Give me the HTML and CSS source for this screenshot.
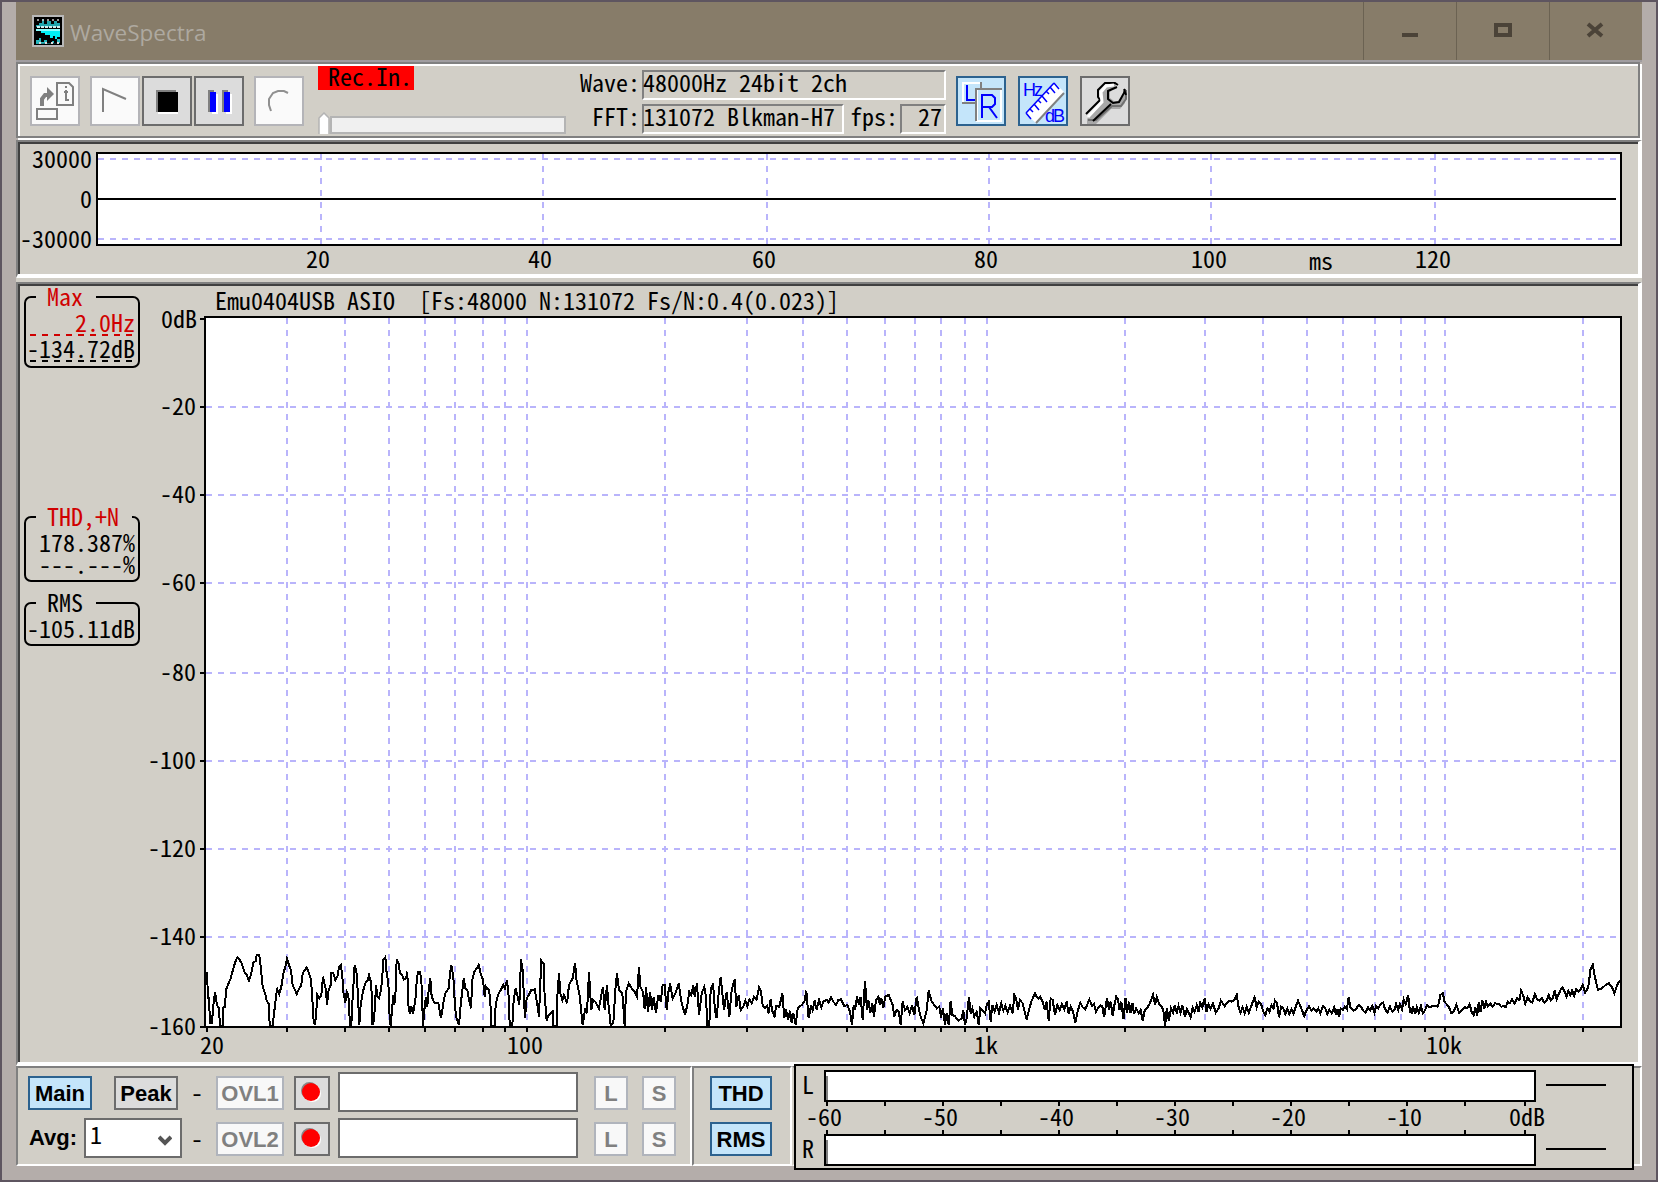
FILE: index.html
```html
<!DOCTYPE html>
<html>
<head>
<meta charset="utf-8">
<title>WaveSpectra</title>
<link rel="stylesheet" href="styles.css">
</head>
<body>
<div class="window">
	<header class="titlebar">
		<svg class="app-icon" width="32" height="32" viewBox="0 0 32 32">
			<rect width="32" height="32" fill="#b8b8b8"/>
			<rect x="2" y="2" width="28" height="28" fill="#000"/>
			<path d="M4 12v-2h3v-2h3v-4h2v5h3v-3h4v3h3v-3h3v2h3v4z" fill="#1fa5ad"/>
			<path d="M5 12h23" stroke="#cfeeee" stroke-width="2" stroke-dasharray="3 1"/>
			<path d="M4 15h24v7h-3v2h-2v-3h-2v2h-3v-3h-5v-2h-4v-2h-5z" fill="#00f0f5"/>
			<path d="M4 15h24" stroke="#8ff" stroke-width="2"/>
			<path d="M4 29v-4h3v-2h2v4h3v-2h3v3h5v-2h2v2h3v-4h3v4z" fill="#27b9c0"/>
			<path d="M5 5h23" stroke="#ccc" stroke-width="1.5" stroke-dasharray="2 3"/>
			<path d="M7 28h20" stroke="#ddd" stroke-width="2" stroke-dasharray="2 4"/>
		</svg>
		<span class="title">WaveSpectra</span>
		<div class="controls">
			<span class="control"><svg width="20" height="16"><path d="M2 13h16" stroke="#4b4338" stroke-width="4"/></svg></span>
			<span class="control"><svg width="20" height="16"><path d="M3 3h14v10H3z" fill="none" stroke="#4b4338" stroke-width="4"/></svg></span>
			<span class="control"><svg width="20" height="16"><path d="M2 2l14 12M16 2L2 14" stroke="#4b4338" stroke-width="4"/></svg></span>
		</div>
	</header>

	<div class="toolbar">
		<button class="tool disabled">
			<svg width="46" height="46" viewBox="32 78 46 46" fill="none" stroke="#808080" stroke-width="2">
				<path d="M57 83h12l4 4v18h-16zM37 109h20v10H37z"/>
				<path d="M66 86v2M64 92h4M66 90v10h3"/>
				<path d="M42 106v-7l3-4h4" stroke-width="4"/>
				<path d="M47 87l7 7-7 7z" fill="#808080" stroke="none"/>
			</svg>
		</button>
		<button class="tool disabled play">
			<svg width="46" height="46" viewBox="92 78 46 46" fill="none" stroke="#808080" stroke-width="2"><path d="M103 112V89l23 10"/></svg>
		</button>
		<button class="tool">
			<svg width="46" height="46" viewBox="144 78 46 46"><path d="M156 90h20v22h-20z" fill="#808080"/><path d="M158 112h20v2h-20z" fill="#fff"/><path d="M158 92h20v20h-20z"/></svg>
		</button>
		<button class="tool">
			<svg width="46" height="46" viewBox="196 78 46 46"><path d="M208 90h6v22h-6zM222 90h6v22h-6z" fill="#808080"/><path d="M212 94h6v20h-6zM226 94h6v20h-6z" fill="#fff"/><path d="M210 92h6v20h-6zM224 92h6v20h-6z" fill="#00f"/></svg>
		</button>
		<button class="tool disabled rec">
			<svg width="46" height="46" viewBox="256 78 46 46" fill="none" stroke="#909090" stroke-width="2"><path d="M288 93l-4-2h-6l-5 2-4 6v6l2 6"/></svg>
		</button>

		<div class="transport">
			<div class="status">&nbsp;Rec.In.</div>
			<div class="slider"><svg class="thumb" width="12" height="22"><path d="M1 22V6l5-5 5 5v16" fill="#fff" stroke="#b4b4b4" stroke-width="1.5"/></svg><div class="track"></div></div>
		</div>

		<div class="info">
			<div class="info-row"><label>Wave:</label><span class="field grow">48000Hz 24bit 2ch</span></div>
			<div class="info-row"><label>FFT:</label><span class="field fft">131072 Blkman-H7</span><label class="fps-label">fps:</label><span class="field fps">27</span></div>
		</div>

		<button class="tool active lr">
			<svg width="46" height="46" viewBox="958 78 46 46" fill="none" stroke-width="2">
				<path d="M963 103V83h18v6" stroke="#fff"/><path d="M962 103h13M981 82v6" stroke="#808080"/>
				<path d="M967 85v15h9" stroke="#00f"/>
				<path d="M977 121V89h24v32z" stroke="#fff"/><path d="M976 121V89h26" stroke="#808080"/>
				<path d="M982 118V95h10l3 3v6l-3 3h-10M989 107l8 11" stroke="#00f"/>
			</svg>
		</button>
		<button class="tool active scale">
			<svg width="46" height="46" viewBox="1020 78 46 46">
				<path d="M1055 83l9 9-28 31-10-9z" fill="#fff"/>
				<path d="M1064 93l-28 30" stroke="#808080" stroke-width="2"/>
				<path d="M1026 113l28-30M1026 113l5 6M1030 109l3 3M1034 104l5 6M1038 100l3 3M1042 96l5 6M1046 91l3 3M1050 87l5 6M1054 83l5 6" stroke="#00f" stroke-width="1.5" fill="none"/>
				<text class="glyph" x="1023" y="96">Hz</text>
				<text class="glyph" x="1045" y="122">dB</text>
			</svg>
		</button>
		<button class="tool scale">
			<svg width="46" height="46" viewBox="1082 78 46 46" fill="none">
				<path d="M1087 119l15-17v-11l6-7h9l-7 8v6l4 3h4l6-9 1 4v7l-5 6h-9l-15 15h-9z" fill="#a8a8a8"/>
				<path d="M1088 120h8l16-14h9l5-7v-9" stroke="#707070" stroke-width="2"/>
				<path d="M1086 114l14-14-2-3v-7l7-7h10l3 2" stroke="#000" stroke-width="2"/>
				<path d="M1088 117l14-15-1-10 5-6 8-1" stroke="#fff" stroke-width="3"/>
				<path d="M1117 87l-9 4v8l5 4 6-1 5-9 1-4M1124 89l2 6M1111 104l-18 17" stroke="#000" stroke-width="2"/>
				<path d="M1120 89l-7 4v5h6z" fill="#dcdcdc"/>
			</svg>
		</button>
	</div>

	<section class="panel wave">
		<svg class="plot" width="1618" height="130" viewBox="20 144 1618 130">
			<rect class="area" x="97" y="153" width="1524" height="92"/>
			<path class="grid" d="M98 159H1616M98 239H1616M321 154V244M543 154V244M767 154V244M989 154V244M1211 154V244M1435 154V244"/>
			<path class="line" d="M98 199H1616"/>
			<g class="end">
				<text x="92" y="168">30000</text><text x="92" y="208">0</text><text x="92" y="248">-30000</text>
			</g>
			<g class="mid">
				<text x="318" y="268">20</text><text x="540" y="268">40</text><text x="764" y="268">60</text><text x="986" y="268">80</text>
				<text x="1209" y="268">100</text><text x="1321" y="270">ms</text><text x="1433" y="268">120</text>
			</g>
		</svg>
	</section>

	<section class="panel spectrum">
		<aside class="readouts">
			<div class="group max">
				<div class="legend red"><span>Max</span></div>
				<div class="value red under">2.0Hz</div>
				<div class="value under">-134.72dB</div>
			</div>
			<div class="group thd">
				<div class="legend red"><span>THD,+N</span></div>
				<div class="value first">178.387%</div>
				<div class="value">---.---%</div>
			</div>
			<div class="group rms">
				<div class="legend"><span>RMS</span></div>
				<div class="value">-105.11dB</div>
			</div>
		</aside>
		<svg class="plot" width="1490" height="776" viewBox="148 286 1490 776">
			<text x="215" y="310" xml:space="preserve">Emu0404USB ASIO  [Fs:48000 N:131072 Fs/N:0.4(0.023)]</text>
			<rect class="area" x="205" y="317" width="1416" height="710"/>
			<path class="grid" d="M206 407H1618M206 495H1618M206 583H1618M206 673H1618M206 761H1618M206 849H1618M206 937H1618"/>
			<path class="grid" d="M287 318V1026M345 318V1026M389 318V1026M425 318V1026M455 318V1026M483 318V1026M505 318V1026M527 318V1026M665 318V1026M747 318V1026M803 318V1026M847 318V1026M885 318V1026M915 318V1026M941 318V1026M965 318V1026M987 318V1026M1125 318V1026M1205 318V1026M1263 318V1026M1307 318V1026M1343 318V1026M1375 318V1026M1401 318V1026M1425 318V1026M1445 318V1026M1583 318V1026"/>
			<path class="line" d="M200 319h4M200 407h4M200 495h4M200 583h4M200 673h4M200 761h4M200 849h4M200 937h4M200 1027h4"/>
			<path class="line" d="M207 1028v4M287 1028v4M345 1028v4M389 1028v4M425 1028v4M455 1028v4M483 1028v4M505 1028v4M527 1028v4M665 1028v4M747 1028v4M803 1028v4M847 1028v4M885 1028v4M915 1028v4M941 1028v4M965 1028v4M987 1028v4M1125 1028v4M1205 1028v4M1263 1028v4M1307 1028v4M1343 1028v4M1375 1028v4M1401 1028v4M1425 1028v4M1445 1028v4M1583 1028v4"/>
			<g class="end">
				<text x="197" y="328">0dB</text><text x="196" y="415">-20</text><text x="196" y="503">-40</text><text x="196" y="591">-60</text><text x="196" y="681">-80</text>
				<text x="196" y="769">-100</text><text x="196" y="857">-120</text><text x="196" y="945">-140</text><text x="196" y="1035">-160</text>
			</g>
			<g class="mid">
				<text x="212" y="1054">20</text><text x="525" y="1054">100</text><text x="986" y="1054">1k</text><text x="1444" y="1054">10k</text>
			</g>
			<!-- noise floor, low / mid / high band -->
			<polyline class="trace" transform="translate(190 930) scale(.33333)" points="51,126 54,205 57,205 60,280 66,280 69,235 75,187 81,225 87,235 90,288 99,288 100,232 105,230 108,180 115,162 122,145 130,115 138,90 142,82 148,88 155,100 163,125 170,135 177,152 184,130 190,98 198,92 200,75 208,75 213,118 218,170 226,192 230,212 237,222 239,288 249,288 251,258 256,220 258,195 262,178 268,192 275,165 280,130 286,110 291,86 297,105 303,122 308,165 315,180 320,192 328,175 334,165 338,130 345,120 350,112 357,130 362,145 366,185 370,265 374,285 378,260 382,195 388,205 394,195 399,140 404,165 408,180 411,225 416,180 422,165 424,130 430,130 436,150 442,140 447,112 453,105 457,140 460,185 466,218 470,185 475,195 480,285 484,285 488,200 491,155 494,105 500,130 504,200 508,285 512,225 516,200 520,180 526,160 533,150 537,135 544,160 547,285 552,270 556,205 558,165 562,200 567,205 572,185 576,155 580,90 586,82 590,130 595,155 598,245 602,288 606,240 610,195 613,225 617,180 620,88 626,100 630,130 636,135 642,148 648,145 652,125 655,225 659,250 664,230 669,250 673,230 677,200 680,155 684,125 690,125 694,150 697,225 699,288 703,240 708,200 712,230 716,180 721,145 725,200 733,218 745,220 753,265 760,220 766,190 776,175 780,130 784,105 790,140 794,210 798,260 807,285 812,225 816,190 821,145 826,175 832,180 836,205 843,235 847,150 853,125 860,115 866,105 872,130 879,150 884,200 888,170 896,180 901,205 903,288 914,288 917,225 921,205 926,190 935,175 940,165 945,175 951,150 954,180 957,210 959,288 967,288 971,210 977,175 983,200 988,225 993,88 998,120 1001,185 1005,265 1010,205 1016,195 1024,180 1034,178 1038,200 1042,225 1047,260 1050,180 1054,92 1061,100 1063,180 1070,272 1076,255 1088,245 1090,288 1101,288 1102,200 1107,130 1111,190 1117,210 1122,195 1131,220 1137,165 1148,145 1155,98 1160,155 1168,190 1172,225 1178,285 1186,235 1191,250 1197,125 1200,180 1204,240 1209,210 1216,215 1227,235 1234,195 1239,170 1244,240 1251,165 1256,230 1262,285 1270,280 1276,180 1281,130 1287,180 1297,190 1300,230 1304,288 1308,185 1316,160 1325,175 1332,182 1341,200 1347,110 1351,170 1359,185 1364,238 1368,170 1374,245 1380,185 1386,240 1391,200 1398,250 1405,195 1412,215 1418,165 1424,165 1430,240 1436,180 1440,165"/>
			<polyline class="trace" transform="translate(650 930) scale(.33333)" points="60,160 68,205 76,190 86,160 94,215 105,255 112,225 118,185 124,195 130,165 134,200 141,160 147,255 155,190 163,170 168,200 172,288 178,285 182,180 189,160 195,240 200,265 206,190 212,140 217,190 222,240 230,185 238,260 245,180 254,148 259,230 266,195 272,240 280,230 286,212 292,228 298,208 305,220 312,200 320,208 327,172 333,185 338,225 345,235 351,228 356,250 362,208 366,240 374,262 378,228 388,230 397,190 403,265 408,238 414,270 420,242 425,278 430,250 437,285 443,235 455,225 463,215 469,182 476,265 483,225 488,240 494,212 500,240 507,210 514,232 520,215 530,210 536,218 543,202 550,215 558,225 565,210 573,208 583,228 592,225 600,245 606,285 611,225 615,240 621,200 627,225 632,200 638,270 645,152 651,240 655,210 661,248 667,220 672,260 678,210 685,200 690,225 694,205 700,232 706,200 716,195 728,225 733,260 740,240 746,245 752,285 758,215 765,240 772,230 779,250 786,225 793,255 800,200 810,255 820,280 830,240 836,182 845,215 860,235 868,230 873,262 879,235 885,285 890,250 896,285 902,212 907,255 914,258 925,272 935,265 940,240 945,285 950,265 957,200 962,250 967,235 973,260 980,245 986,285 991,235 997,240 1005,250 1010,225 1016,215 1022,275 1027,225 1034,245 1040,225 1047,248 1054,220 1060,242 1066,228 1073,248 1080,228 1088,250 1093,195 1098,205 1104,238 1110,210 1118,220 1124,245 1130,270 1138,235 1145,212 1155,190 1160,200 1165,205 1170,200 1178,215 1184,240 1190,215 1196,272 1202,205 1208,210 1215,255 1222,225 1229,240 1236,222 1243,238 1250,215 1256,250 1262,230 1269,245 1276,278 1284,240 1291,218 1298,232 1306,238 1318,208 1326,228 1332,222 1338,245 1350,225"/>
			<polyline class="trace" transform="translate(1100 930) scale(.34436 .33333)" points="0,225 7,230 12,262 20,205 26,238 31,215 37,258 42,225 47,200 52,208 57,240 62,215 68,268 74,205 78,250 84,215 89,250 94,218 99,252 105,235 112,250 118,240 124,272 130,240 136,235 145,220 154,195 160,225 165,202 172,222 178,228 184,242 189,288 194,235 200,272 206,235 212,248 217,225 223,250 228,228 234,248 239,225 247,260 252,238 257,248 263,262 269,232 275,245 281,225 286,245 291,218 297,232 304,205 309,245 315,222 321,235 328,220 336,248 345,235 351,212 362,228 370,218 377,212 383,215 390,210 397,195 403,235 408,248 414,232 420,250 426,230 432,248 438,232 444,215 449,202 455,232 461,215 468,222 474,245 480,255 486,235 492,245 498,225 504,235 508,212 514,220 520,262 526,230 532,235 538,252 544,235 550,252 556,238 562,250 569,228 575,212 582,228 588,245 593,258 600,240 607,228 614,242 620,235 628,245 634,235 640,250 647,228 653,232 660,252 666,240 673,250 680,232 686,255 690,238 694,262 699,235 705,240 711,230 717,238 722,202 728,235 737,242 745,235 751,225 758,230 764,242 771,248 778,232 785,240 791,228 797,248 802,228 808,235 815,222 822,218 828,238 835,248 842,230 849,245 855,240 860,222 866,240 871,222 877,238 882,208 888,222 895,195 900,245 905,248 909,228 915,252 920,232 926,248 932,228 938,250 944,240 950,225 957,232 965,228 972,228 980,230 984,220 988,195 996,190 1000,215 1006,222 1014,232 1020,250 1027,245 1035,225 1043,248 1050,240 1060,232 1067,235 1073,222 1079,245 1085,255 1090,232 1095,258 1100,215 1105,245 1110,212 1116,235 1121,215 1126,228 1133,220 1140,230 1147,220 1158,222 1165,230 1172,228 1178,232 1184,215 1190,220 1197,208 1204,220 1211,205 1218,210 1223,182 1230,200 1235,220 1242,202 1248,212 1255,218 1259,205 1263,192 1269,208 1276,212 1283,205 1290,218 1297,212 1303,195 1309,212 1315,205 1320,182 1326,208 1333,190 1338,178 1343,172 1349,185 1355,200 1360,182 1366,195 1371,182 1377,198 1383,178 1390,185 1396,178 1402,165 1409,188 1415,178 1418,170 1425,115 1431,105 1437,140 1446,180 1458,175 1468,165 1478,160 1486,170 1494,190 1502,165 1510,150"/>
		</svg>
	</section>

	<footer class="bottom">
		<div class="bar overlay">
			<div class="row">
				<button class="btn active main">Main</button>
				<button class="btn peak">Peak</button>
				<span class="dash">-</span>
				<button class="btn disabled ovl">OVL1</button>
				<button class="btn dot"><svg width="32" height="30"><circle cx="13.500" cy="12.500" r="8.500" fill="#888"/><circle cx="16.500" cy="15.500" r="8.500" fill="#fff"/><circle cx="15" cy="14" r="9" fill="#f00"/></svg></button>
				<div class="textbox"></div>
				<button class="btn disabled small">L</button>
				<button class="btn disabled small s">S</button>
			</div>
			<div class="row">
				<label class="avg">Avg:</label>
				<div class="combo"><span>1</span><svg width="14" height="12"><path d="M1 2l6 6 6-6" fill="none" stroke="#555" stroke-width="4"/></svg></div>
				<span class="dash">-</span>
				<button class="btn disabled ovl">OVL2</button>
				<button class="btn dot"><svg width="32" height="30"><circle cx="13.500" cy="12.500" r="8.500" fill="#888"/><circle cx="16.500" cy="15.500" r="8.500" fill="#fff"/><circle cx="15" cy="14" r="9" fill="#f00"/></svg></button>
				<div class="textbox"></div>
				<button class="btn disabled small">L</button>
				<button class="btn disabled small s">S</button>
			</div>
		</div>
		<div class="bar modes">
			<button class="btn active">THD</button>
			<button class="btn active">RMS</button>
		</div>
		<div class="meter-wrap">
			<div class="meter">
				<svg class="plot" width="836" height="102" viewBox="796 1066 836 102">
					<rect class="area" x="825" y="1071" width="710" height="30"/>
					<rect class="area" x="825" y="1135" width="710" height="30"/>
					<path d="M827 1076v24M827 1140v24" stroke="#808080" stroke-width="2"/>
					<path class="line" d="M827 1102v4M885 1102v4M943 1102v4M1001 1102v4M1059 1102v4M1117 1102v4M1175 1102v4M1233 1102v4M1291 1102v4M1349 1102v4M1407 1102v4M1465 1102v4M1525 1102v4"/>
					<path class="line" d="M827 1130v4M885 1130v4M943 1130v4M1001 1130v4M1059 1130v4M1117 1130v4M1175 1130v4M1233 1130v4M1291 1130v4M1349 1130v4M1407 1130v4M1465 1130v4M1525 1130v4"/>
					<path class="line" d="M1546 1085h60M1546 1149h60"/>
					<text x="802" y="1094">L</text><text x="802" y="1158">R</text>
					<g class="mid">
						<text x="824" y="1126">-60</text><text x="940" y="1126">-50</text><text x="1056" y="1126">-40</text><text x="1172" y="1126">-30</text>
						<text x="1288" y="1126">-20</text><text x="1404" y="1126">-10</text><text x="1527" y="1126">0dB</text>
					</g>
				</svg>
			</div>
		</div>
	</footer>
</div>
</body>
</html>
```

FILE: styles.css
```css
* { box-sizing: border-box; }
body {
	margin: 0;
	font-family: "Noto Sans CJK JP", monospace;
	font-feature-settings: "hwid";
	font-size: 24px;
	line-height: 24px;
	color: #000;
}
svg { display: block; }
button {
	padding: 0;
	flex: none;
	font: inherit;
}
.window {
	width: 1658px;
	height: 1182px;
	padding: 0 14px;
	border: 2px solid #5e5560;
	background-color: #b4adaa;
	overflow: hidden;
}

/* title bar */
.titlebar {
	display: flex;
	height: 60px;
	padding-left: 16px;
	border-bottom: 2px solid #a09da0;
	background-color: #877c69;
}
.app-icon { margin-top: 13px; }
.title {
	margin: 12px 0 0 6px;
	font-family: "Open Sans", sans-serif;
	font-size: 22.5px;
	line-height: 38px;
	color: #aea9a0;
	font-feature-settings: normal;
}
.controls {
	display: flex;
	margin-left: auto;
}
.control {
	width: 93px;
	padding: 20px 0 0 36px;
	border-left: 1px solid #6b6252;
}

/* toolbar */
.toolbar {
	display: flex;
	align-items: flex-start;
	width: 1624px;
	height: 76px;
	margin-bottom: 2px;
	padding: 12px 0 0 12px;
	border: 2px solid #808080;
	background-color: #d2cfc7;
	box-shadow: inset 2px 2px #fff, 2px 2px #fff;
}
.tool {
	width: 50px;
	height: 50px;
	margin-right: 2px;
	border: 2px solid #6c6c6c;
	background-color: #dcdcdc;
}
.tool.disabled {
	border-color: #b4b4b8;
	background-color: #fafafa;
}
.tool.active {
	border-color: #2c628f;
	background-color: #c4e5fa;
}
.tool.play { margin-left: 8px; }
.tool.rec { margin: 0 14px 0 8px; }
.tool.lr { margin-left: 10px; }
.tool.scale { margin-left: 10px; }
.glyph {
	font-family: "Liberation Sans", sans-serif;
	font-size: 18px;
	font-feature-settings: normal;
	fill: #00f;
	letter-spacing: -2px;
}
.transport {
	width: 248px;
	margin-top: -10px;
}
.status {
	width: 96px;
	height: 24px;
	line-height: 20px;
	text-indent: -2px;
	background-color: #f00;
}
.slider {
	display: flex;
	align-items: flex-end;
	margin-top: 22px;
}
.track {
	flex: 1;
	height: 18px;
	border: 2px solid #b4b4b4;
	background-color: #f0f0f0;
}
.info {
	width: 380px;
	margin-top: -6px;
}
.info-row {
	display: flex;
	height: 30px;
	margin-bottom: 4px;
}
.info-row label {
	width: 76px;
	padding-right: 2px;
	text-align: right;
}
.field {
	height: 30px;
	border: 2px solid;
	border-color: #808080 #fff #fff #808080;
	line-height: 20px;
	text-indent: -1px;
	white-space: pre;
}
.grow { flex: 1; }
.fft { width: 202px; }
.info-row .fps-label { width: 56px; }
.fps {
	width: 46px;
	padding-right: 2px;
	text-align: right;
}

/* plots */
.panel {
	display: flex;
	padding: 2px 0 0 2px;
	border: solid;
	border-width: 2px 4px 4px 2px;
	border-color: #808080 #fff #fff #808080;
	background-color: #d2cfc7;
	box-shadow: inset 2px 2px #404040;
}
.wave {
	height: 138px;
	box-shadow: inset 2px 2px #404040, 0 4px #d2cfc7;
}
.spectrum {
	height: 784px;
	margin-top: 4px;
}
.plot { shape-rendering: crispEdges; }
.plot text { white-space: pre; }
.area {
	fill: #fff;
	stroke: #000;
	stroke-width: 2;
}
.grid {
	fill: none;
	stroke: #b9b4fb;
	stroke-width: 2;
	stroke-dasharray: 6 6;
}
.line {
	fill: none;
	stroke: #000;
	stroke-width: 2;
}
.trace {
	fill: none;
	stroke: #000;
	stroke-width: 6;
}
.end text { text-anchor: end; }
.mid text { text-anchor: middle; }

/* readout boxes */
.readouts {
	width: 128px;
	padding: 10px 8px 0 4px;
}
.group {
	padding: 0 3px 0 0;
	border: 2px solid #000;
	border-radius: 7px;
}
.legend {
	height: 24px;
	margin-top: -12px;
	padding-left: 10px;
	line-height: 20px;
}
.legend span {
	display: inline-block;
	width: 60px;
	padding-left: 11px;
	background-color: #d2cfc7;
}
.thd .legend span { width: 96px; }
.value {
	height: 26px;
	line-height: 24px;
	text-align: right;
	white-space: pre;
}
.value.first { height: 22px; }
.red { color: #d00000; }
.under {
	background: repeating-linear-gradient(90deg, currentColor 0 6px, transparent 6px 12px) 4px 100% / 102px 2px no-repeat;
}
.max { height: 72px; }
.thd {
	height: 66px;
	margin-top: 148px;
}
.rms {
	height: 44px;
	margin-top: 20px;
}

/* bottom bar */
.bottom {
	display: flex;
	height: 100px;
	background-color: #d2cfc7;
}
.bar {
	border: 2px solid;
	border-color: #808080 #fff #fff #808080;
}
.overlay {
	width: 676px;
	padding: 4px 0 0 10px;
}
.row {
	display: flex;
	align-items: center;
	height: 40px;
	margin-bottom: 6px;
}
.btn {
	height: 34px;
	border: 2px solid #6c6c6c;
	background-color: #dcdcdc;
	font: bold 22px/32px "Liberation Sans", Arial, sans-serif;
	font-feature-settings: normal;
	color: #000;
}
.row .btn { margin-top: 2px; }
.btn.disabled {
	border-color: #b0b4bc;
	background-color: #f8f8f8;
	color: #808080;
}
.btn.active {
	border-color: #2c628f;
	background-color: #c4e5fa;
}
.main { width: 64px; }
.peak {
	width: 64px;
	margin-left: 22px;
}
.dash {
	width: 38px;
	text-align: center;
	line-height: 20px;
	flex: none;
}
.ovl { width: 68px; }
.row .dot {
	width: 36px;
	margin-left: 10px;
}
.textbox {
	flex: none;
	width: 240px;
	height: 40px;
	margin: 0 16px 0 8px;
	border: 2px solid #6c6c6c;
	background-color: #fff;
}
.small { width: 34px; }
.row .s { margin-left: 14px; }
.avg {
	flex: none;
	width: 56px;
	padding-left: 1px;
	font: bold 22px/30px "Liberation Sans", Arial, sans-serif;
	font-feature-settings: normal;
}
.combo {
	display: flex;
	justify-content: space-between;
	flex: none;
	width: 98px;
	height: 40px;
	margin-right: -4px;
	padding: 2px 8px 0 4px;
	border: 2px solid #6c6c6c;
	background-color: #fff;
}
.combo svg { margin-top: 13px; }
.modes {
	display: flex;
	flex-direction: column;
	gap: 12px;
	width: 100px;
	padding: 8px 0 0 16px;
}
.modes .btn { width: 62px; }
.meter-wrap {
	flex: 1;
	border: 2px solid;
	border-color: #808080 #fff #fff #d2cfc7;
}
.meter {
	width: 840px;
	height: 106px;
	margin-top: -4px;
	border: 2px solid #000;
	background-color: #d2cfc7;
}
```
